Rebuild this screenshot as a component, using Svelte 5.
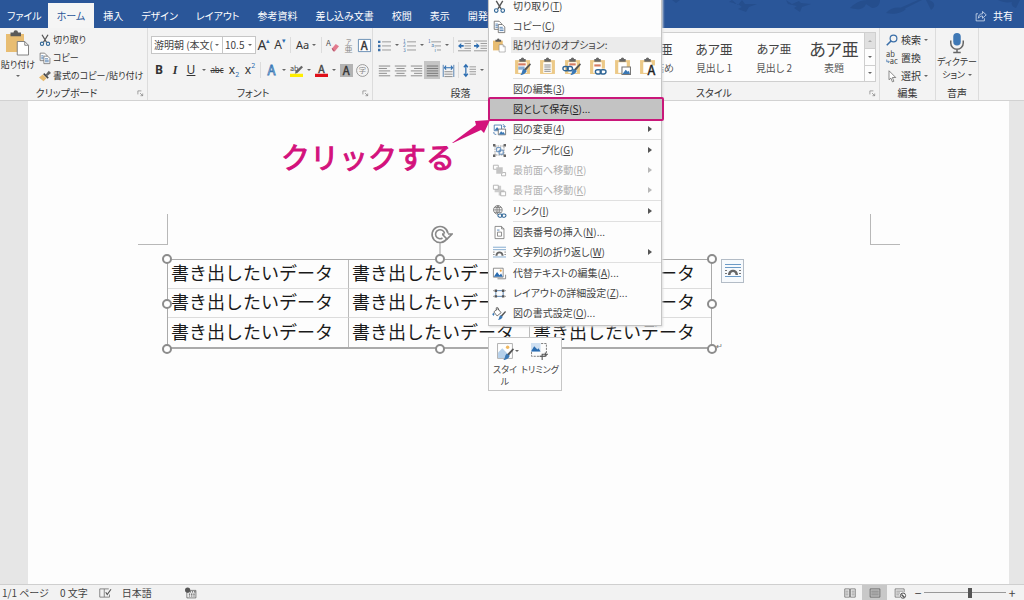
<script>
  // リボン・文書・右クリックメニューの表示データ
  const tabs = ['ファイル', 'ホーム', '挿入', 'デザイン', 'レイアウト', '参考資料', '差し込み文書', '校閲', '表示', '開発'];
  let activeTab = $state('ホーム');

  const styles = [
    { name: '行間詰め', size: 'normal' },
    { name: '見出し 1', size: 'normal' },
    { name: '見出し 2', size: 'small' },
    { name: '表題', size: 'large' },
  ];

  const menuTop = [
    { icon: 'cut', label: '切り取り', key: 'T' },
    { icon: 'copy', label: 'コピー', key: 'C' },
  ];

  const pasteOptions = [
    { icon: 'pasteSource', label: '元の書式を保持' },
    { icon: 'pasteTheme', label: '貼り付け先のテーマを使用' },
    { icon: 'pasteLinkSource', label: 'リンク (元の書式を保持)' },
    { icon: 'pasteLink', label: 'リンク (貼り付け先のテーマ)' },
    { icon: 'pastePicture', label: '図' },
    { icon: 'pasteText', label: 'テキストのみ保持' },
  ];

  const menuGroups = [
    [
      { label: '図の編集', key: '3' },
      { label: '図として保存', key: 'S', more: true, active: true },
      { icon: 'change', label: '図の変更', key: '4', sub: true },
    ],
    [
      { icon: 'group', label: 'グループ化', key: 'G', sub: true },
      { icon: 'front', label: '最前面へ移動', key: 'R', sub: true, disabled: true },
      { icon: 'back', label: '最背面へ移動', key: 'K', sub: true, disabled: true },
    ],
    [{ icon: 'link', label: 'リンク', key: 'I', sub: true }],
    [
      { icon: 'caption', label: '図表番号の挿入', key: 'N', more: true },
      { icon: 'wrap', label: '文字列の折り返し', key: 'W', sub: true },
    ],
    [
      { icon: 'alt', label: '代替テキストの編集', key: 'A', more: true },
      { icon: 'layout', label: 'レイアウトの詳細設定', key: 'Z', more: true },
      { icon: 'format', label: '図の書式設定', key: 'O', more: true },
    ],
  ];

  const cellText = '書き出したいデータ';
  const rows = [0, 1, 2];
  const cols = [0, 1, 2];
  const handles = ['nw', 'n', 'ne', 'w', 'e', 'sw', 's', 'se'];

  let zoom = $state(100);

  // 貼り付け系アイコンで共有するパーツ
  const board =
    '<path d="M1 2h14v13H1z" fill="#ecc987"/><path d="M4 4h8v10H4z" fill="#fff"/><path d="M5 1h1.500a1.500 1.500 0 0 1 3 0H11v2.500H5z" fill="#666"/>';
  const chain =
    '<path d="M6 10h10v6H6z" fill="#fff"/><g fill="none" stroke="#2f6595" stroke-width="1.300"><rect x="6" y="11" width="5.500" height="4" rx="2"/><rect x="10.500" y="11" width="5.500" height="4" rx="2"/></g>';
  const brush =
    '<path d="M15 5l1 1-5 6-2-1z" fill="#555"/><path d="M9 10l3 2c-1 3-4 4-6 4 2-2 1-4 3-6z" fill="#3a78b5"/>';

  const icons = {
    paste:
      '<path d="M0 2h12v12H0z" fill="#e8bd72"/><path d="M3 1h2a1.500 1.500 0 0 1 3 0h2v2.500H3z" fill="#5a5a5a"/><path d="M7.500 7h5l2.500 2.500V16H7.500z" fill="#fff" stroke="#777" stroke-width=".6"/><path d="M12.500 7v2.500H15" fill="none" stroke="#777" stroke-width=".6"/>',
    cut: '<path d="M4 1l6 10M12 1L6 11" stroke="#555" stroke-width="1.700" fill="none"/><circle cx="4" cy="13" r="2.200" fill="none" stroke="#2f6595" stroke-width="1.400"/><circle cx="12" cy="13" r="2.200" fill="none" stroke="#2f6595" stroke-width="1.400"/>',
    copy: '<g fill="#fff" stroke="#666"><path d="M1.500 1.500h6l3 3v7h-9z"/><path d="M6.500 5.500h5l3 3v7h-8z"/></g><path d="M3 5h3M3 7h3M3 9h3M8 9h4M8 11h5M8 13h5" stroke="#3b6fa8"/>',
    painter: '<path d="M9 6l4-5 3 3-5 4z" fill="#666"/><path d="M7 4l6 6-1.500 1.500-6-6z" fill="#444"/><path d="M5 6l5 5-4 4-6-5z" fill="#e6ba6e"/>',
    eraser: '<text x="0" y="9" font-size="10" fill="#555">A</text><path d="M7 12l5-6 4 3-5 6H9z" fill="#e27a8e"/><path d="M7 12l2 3h2l-3-4z" fill="#b65f72"/>',
    ruby: '<text x="5" y="6" font-size="7" fill="#777">ア</text><text x="3" y="16" font-size="10" fill="#888">亜</text>',
    boxA: '<path d="M.5.5h15v15H.5z" fill="#fff" stroke="#4f7ba8"/><text x="3.500" y="13" font-size="14" fill="#333" stroke="#333" stroke-width=".5">A</text>',
    outlineA: '<text x="3" y="14" font-size="16" fill="#fff" stroke="#3a78b5">A</text>',
    marker: '<text x="0" y="8" font-size="9" fill="#444">ab</text><path d="M14 2l2 2-7 7-3 1 1-3z" fill="#666"/><path d="M0 12h16v4H0z" fill="#ffee00"/>',
    colorA: '<text x="4" y="11" font-size="13" fill="#444" stroke="#444" stroke-width=".5">A</text><path d="M0 12h16v4H0z" fill="#e0101a"/>',
    shadeA: '<path d="M0 0h16v16H0z" fill="#b3b3b3"/><text x="3.500" y="13" font-size="14" fill="#333" stroke="#333" stroke-width=".5">A</text>',
    enclose: '<circle cx="8" cy="8" r="7.300" fill="none" stroke="#888"/><text x="3.500" y="11.500" font-size="9" fill="#888">字</text>',
    bullets: '<path d="M0 2h3v3H0zM0 7h3v3H0zM0 12h3v3H0z" fill="#3b6fa8"/><path d="M5 3.500h11M5 8.500h11M5 13.500h11" stroke="#888"/>',
    numbers: '<g font-size="6" fill="#3b6fa8"><text x="0" y="5">1</text><text x="0" y="10">2</text><text x="0" y="16">3</text></g><path d="M5 3.500h11M5 8.500h11M5 13.500h11" stroke="#888"/>',
    multilevel: '<g font-size="6" fill="#3b6fa8"><text x="0" y="5">1</text><text x="4" y="10">a</text><text x="8" y="16">i</text></g><path d="M4 3.500h12M8 8.500h8M11 13.500h5" stroke="#888"/>',
    outdent: '<path d="M0 2.500h16M8 5.500h8M8 8.500h8M8 11.500h8M0 14.500h16" stroke="#888"/><path d="M0 8.500l4-3.500v2.500h3v2H4V12z" fill="#2b6cb0"/>',
    indent: '<path d="M0 2.500h16M8 5.500h8M8 8.500h8M8 11.500h8M0 14.500h16" stroke="#888"/><path d="M7 8.500L3 5v2.500H0v2h3V12z" fill="#2b6cb0"/>',
    alignL: '<path d="M1 2.500h14M1 5.500h10M1 8.500h14M1 11.500h10M1 14.500h14" stroke="#777"/>',
    alignC: '<path d="M1 2.500h14M3 5.500h10M1 8.500h14M3 11.500h10M1 14.500h14" stroke="#777"/>',
    alignR: '<path d="M1 2.500h14M5 5.500h10M1 8.500h14M5 11.500h10M1 14.500h14" stroke="#777"/>',
    justify: '<path d="M1 2.500h14M1 5.500h14M1 8.500h14M1 11.500h14M1 14.500h14" stroke="#666"/>',
    distribute: '<path d="M1.500 1v15M14.500 1v15" stroke="#3b6fa8"/><path d="M3 4.500h10M5 2L3 4.500 5 7M11 2l2 2.500L11 7" fill="none" stroke="#2b6cb0" stroke-width="1.300"/><path d="M3 9.500h10M3 12.500h10M3 15.500h10" stroke="#777"/>',
    spacing: '<path d="M3.500 1v14M1 4l2.500-3L6 4M1 12l2.500 3L6 12" fill="none" stroke="#2b6cb0" stroke-width="1.500"/><path d="M8 3.500h8M8 6.500h8M8 9.500h8M8 12.500h8" stroke="#888"/>',
    search: '<circle cx="10" cy="6" r="4.500" fill="none" stroke="#3b6fa8" stroke-width="1.600"/><path d="M7 9l-6 6" stroke="#3b6fa8" stroke-width="2.200"/>',
    replace: '<g font-size="10" fill="#444"><text x="0" y="7">ab</text><text x="5" y="16">ac</text></g><path d="M1 10v3h3M3 11.500L4.500 13 3 14.500" fill="none" stroke="#3b6fa8"/>',
    select: '<path d="M4 1l9 9H8.500l2 5-2 .8-2-5L4 13z" fill="#fff" stroke="#666"/>',
    mic: '<rect x="5" y="0" width="6" height="10" rx="3" fill="#3f78b5"/><path d="M3 6v2a5 5 0 0 0 10 0V6M8 13v2.500M5 15.500h6" fill="none" stroke="#666" stroke-width="1.200"/>',
    share: '<path d="M4 5H1.500v9.500h11V11" fill="none" stroke="#dce6f4"/><path d="M4.500 11c0-4 2-6 5.500-6V2l5 4.500-5 4.500V8c-3 0-4 1-5.500 3z" fill="none" stroke="#dce6f4"/>',
    pasteSource: board + '<path d="M4 5h7v2H4z" fill="#d67b60"/><path d="M4 8h6v3H4z" fill="#8aacd0"/>' + brush,
    pasteTheme: board + '<path d="M5 6.500h6M5 8.500h6M5 10.500h6M5 12.500h6" stroke="#888"/>',
    pasteLinkSource: board + '<path d="M5 5h6v2H5z" fill="#d67b60"/><g fill="none" stroke="#2f6595" stroke-width="1.300"><rect x="-1" y="8" width="5" height="4" rx="2"/><rect x="3" y="8" width="5" height="4" rx="2"/></g>' + brush,
    pasteLink: board + '<path d="M5 6h6v2H5z" fill="#d67b60"/>' + chain,
    pastePicture: board + '<path d="M7.500 8.500h8v7h-8z" fill="#fff" stroke="#777"/><path d="M8 15l3-4 2 2 1-1 1 3z" fill="#3a78b5"/>',
    pasteText: board + '<path d="M8 7h8v9H8z" fill="#fff"/><text x="8" y="16" font-size="12" fill="#222" stroke="#222" stroke-width=".4">A</text>',
    change: '<path d="M1.500 2.500h9v7h-9z" fill="#fff" stroke="#3b6fa8"/><path d="M2 9l3-4 3 4z" fill="#3a78b5"/><path d="M6.500 7.500h9v7h-9z" fill="#fff" stroke="#666"/><path d="M7 14l3-4 2 2 1-1 2 3z" fill="#3a78b5"/><path d="M12 2c2 0 2 1 2 3M12.500 4L14 5.500 15.500 4M1 11c0 3 1 3 3 3" fill="none" stroke="#3b6fa8"/>',
    group: '<path d="M2.500 2.500h11v11h-11z" fill="none" stroke="#888" stroke-dasharray="2 1"/><path d="M4.500 4.500h5v5h-5zM7.500 7.500h5v5h-5z" fill="none" stroke="#3b6fa8"/><path d="M0 0h3v3H0zM13 0h3v3h-3zM0 13h3v3H0zM13 13h3v3h-3z" fill="#666"/>',
    front: '<path d="M.5 1.500h6v5h-6zM10.500 10.500h5v4h-5z" fill="none" stroke="#aaa"/><path d="M4 4h8v8H4z" fill="#c4c4c4"/>',
    back: '<path d="M2 2h8v8H2zM7 7h7v7H7z" fill="#ccc"/><path d="M.5 1.500h6v5h-6zM9.500 9.500h6v5h-6z" fill="#fff" stroke="#aaa"/>',
    link: '<circle cx="6" cy="6" r="5.300" fill="none" stroke="#666"/><path d="M1 6h10M6 1v10M2 3h8M2 9h8M6 1C3 4 3 8 6 11M6 1c3 3 3 7 0 10" fill="none" stroke="#666" stroke-width=".8"/>' + chain,
    caption: '<path d="M2.500.500h8l3 3v12h-11z" fill="#fff" stroke="#777"/><path d="M10.500.500v3h3M5.500 7.500h5v5h-5z" fill="none" stroke="#777"/><path d="M5 5h3" stroke="#3b6fa8"/>',
    wrap: '<path d="M0 1.500h16M0 4.500h16M0 13.500h16" stroke="#6b9ac6"/><path d="M0 7.500h2M14 7.500h2M0 10.500h2M14 10.500h2" stroke="#777"/><path d="M3 12c0-7 10-7 10 0h-2.500c0-4-5-4-5 0z" fill="#666"/>',
    alt: '<path d="M.5 1.500h12v11H.5z" fill="#fff" stroke="#777"/><path d="M1 12l4-6 3 4 2-2 2 4z" fill="#2b6cb0"/><circle cx="9.500" cy="4.500" r="1.300" fill="#e8a03c"/><path d="M5.500 14.500h10v-5" fill="none" stroke="#777"/>',
    layout: '<path d="M3.500 4.500h9v7h-9z" fill="none" stroke="#3b6fa8"/><path d="M2 3h3v3H2zM11 3h3v3h-3zM2 10h3v3H2zM11 10h3v3h-3z" fill="#555"/><path d="M0 4.500h2M0 11.500h2M14 4.500h2M14 11.500h2" stroke="#888"/>',
    format: '<path d="M1 6l5-4 4 5-5 4zM4 4V1c2-1 3 0 3 3" fill="#fff" stroke="#555"/><path d="M0 8c-1 3 2 3 1 0z" fill="#3a78b5" stroke="#3a78b5"/>' + brush,
    stylePic: '<path d="M.5.500h14v14H.5z" fill="#fff" stroke="#999" stroke-width=".7"/><circle cx="10" cy="4" r="1.600" fill="#f0b860"/><path d="M1 14V9l4-4 5 5 1 4z" fill="#b5d0ea"/>' + brush,
    crop: '<path d="M.5.500h14v12H.5z" fill="none" stroke="#666" stroke-dasharray="2 1" stroke-width=".8"/><path d="M0 0h9v8H0z" fill="#cfe0f2"/><path d="M0 8l3-5 3 3 1-1 2 3z" fill="#2b6cb0"/><path d="M8 12.500h5.500V9M10.500 16v-5.500H16" fill="none" stroke="#555"/>',
    proof: '<path d="M1 2.500h6v11H1zM7 2.500h6M7 13.500h7V10" fill="none" stroke="#666"/><path d="M9 7l2 3 5-7" fill="none" stroke="#555" stroke-width="1.500"/>',
    macro: '<path d="M2.500 4.500h12v10h-12z" fill="#fff" stroke="#555"/><path d="M3 6.500h12M5 9.500h8M5 12h8" stroke="#555" stroke-width="1.500" stroke-dasharray="2 1"/><circle cx="3.500" cy="4" r="3.500" fill="#555"/>',
    readView: '<path d="M1 2.500h6.500v11H1zM8.500 2.500H15v11H8.500z" fill="none" stroke="#666"/><path d="M2 5.500h4M2 8h4M2 10.500h4M10 5.500h4M10 8h4M10 10.500h4" stroke="#777"/>',
    printView: '<path d="M1.500 2.500h13v11h-13z" fill="none" stroke="#555"/><path d="M3 5.500h10M3 8h10M3 10.500h10" stroke="#666"/>',
    webView: '<path d="M8 13.500H1.500v-11h12V7" fill="none" stroke="#666"/><path d="M3 5.500h9M3 8h5M3 10.500h4" stroke="#777"/><circle cx="12" cy="11.500" r="3.500" fill="#fff" stroke="#555" stroke-width="1.300"/><path d="M10 10l4 4" stroke="#555" stroke-width="2"/>',
    launcher: '<path d="M2 10V2h8M7 7l6 6M13 8v5H8" fill="none" stroke="#777" stroke-width="1.500"/>',
  };
</script>

{#snippet icon(name)}
  <svg class="icon" viewBox="0 0 16 16" aria-hidden="true">{@html icons[name]}</svg>
{/snippet}

{#snippet tool(name, label, on = false)}
  <button class="tool" class:on aria-label={label}>{@render icon(name)}</button>
{/snippet}

{#snippet drop(label)}
  <button class="drop" aria-label={label}><i class="caret"></i></button>
{/snippet}

{#snippet menuItem(item)}
  <button class="item" class:active={item.active} role="menuitem" disabled={item.disabled}>
    <span class="slot">{#if item.icon}{@render icon(item.icon)}{/if}</span>
    <span class="text">{item.label}(<u>{item.key}</u>){item.more ? '...' : ''}</span>
    {#if item.sub}<i class="sub"></i>{/if}
  </button>
{/snippet}

<div class="window">
  <header class="titlebar">
    <svg class="leaves" viewBox="0 0 364 14" aria-hidden="true">
      <path d="M72 0l6 5 4-5 3 4 12 0-8 3-3 5-8-3 4-2-4-3-9-2zM126 0l6 4 7-3 2 2 10 1-9 3-2 5-6-4 3-2-9-2zM190 8c8-8 14-8 20-8h10c0 4-2 8-8 8l-6-4c-2 6-9 6-16 4zM226 13c4-5 12-7 20-4-4 4-12 6-20 4zM240 8l18-8h4l-18 9zM266 0l5 10c5-4 4-8-2-10zM338 0h22l-4 8c-4-1-5-4-4-6-5 1-10 0-14-2zM12 0h8l-4 3z" />
    </svg>
    <nav class="tabs">
      {#each tabs as tab}
        <button class="tab" class:current={tab === activeTab} onclick={() => (activeTab = tab)}>{tab}</button>
      {/each}
    </nav>
    <button class="share">{@render icon('share')}共有</button>
  </header>

  <section class="ribbon">
    <div class="group clipboard">
      <div class="body">
        <button class="big">{@render icon('paste')}<span>貼り付け</span><i class="caret"></i></button>
        <div class="stack">
          <button class="line">{@render icon('cut')}切り取り</button>
          <button class="line">{@render icon('copy')}コピー</button>
          <button class="line">{@render icon('painter')}書式のコピー/貼り付け</button>
        </div>
      </div>
      <footer>クリップボード<span class="launch">{@render icon('launcher')}</span></footer>
    </div>

    <div class="group font">
      <div class="rows">
        <div class="row">
          <label class="combo family">
            <select aria-label="フォント"><option>游明朝 (本文(</option></select>
            <i class="caret"></i>
          </label>
          <label class="combo size">
            <select aria-label="フォント サイズ"><option>10.5</option></select>
            <i class="caret"></i>
          </label>
          <button class="tool letter grow">A<sup>▴</sup></button>
          <button class="tool letter">A<sup>▾</sup></button>
          <i class="bar"></i>
          <button class="tool letter case">Aa<i class="caret"></i></button>
          <i class="bar"></i>
          {@render tool('eraser', '書式のクリア')}
          {@render tool('ruby', 'ルビ')}
          {@render tool('boxA', '囲み線')}
        </div>
        <div class="row">
          <button class="tool letter"><b>B</b></button>
          <button class="tool letter"><em>I</em></button>
          <button class="tool letter"><u>U</u></button>
          {@render drop('下線')}
          <button class="tool letter strike"><s>abc</s></button>
          <button class="tool letter">x<small>2</small></button>
          <button class="tool letter">x<sup>2</sup></button>
          <i class="bar"></i>
          {@render tool('outlineA', '文字の効果')}
          {@render drop('文字の効果の一覧')}
          {@render tool('marker', '蛍光ペン')}
          {@render drop('蛍光ペンの色')}
          {@render tool('colorA', 'フォントの色')}
          {@render drop('フォントの色の一覧')}
          {@render tool('shadeA', '文字の網かけ')}
          {@render tool('enclose', '囲い文字')}
        </div>
      </div>
      <footer>フォント<span class="launch">{@render icon('launcher')}</span></footer>
    </div>

    <div class="group paragraph">
      <div class="rows">
        <div class="row">
          {@render tool('bullets', '箇条書き')}
          {@render drop('行頭文字')}
          {@render tool('numbers', '段落番号')}
          {@render drop('番号の書式')}
          {@render tool('multilevel', 'アウトライン')}
          {@render drop('リストの種類')}
          <i class="bar"></i>
          {@render tool('outdent', 'インデントを減らす')}
          {@render tool('indent', 'インデントを増やす')}
        </div>
        <div class="row">
          {@render tool('alignL', '左揃え')}
          {@render tool('alignC', '中央揃え')}
          {@render tool('alignR', '右揃え')}
          {@render tool('justify', '両端揃え', true)}
          {@render tool('distribute', '均等割り付け')}
          <i class="bar"></i>
          {@render tool('spacing', '行と段落の間隔')}
          {@render drop('行間')}
        </div>
      </div>
      <footer>段落</footer>
    </div>

    <div class="group styles">
      <div class="gallery">
        {#each styles as style}
          <button class="style">
            <span class="sample {style.size}">あア亜</span>
            <span>{style.name}</span>
          </button>
        {/each}
        <div class="scroll">
          <button class="off" aria-label="上へ"><i class="caret up"></i></button>
          <button aria-label="下へ"><i class="caret"></i></button>
          <button class="all" aria-label="その他"><i class="caret"></i></button>
        </div>
      </div>
      <footer>スタイル<span class="launch">{@render icon('launcher')}</span></footer>
    </div>

    <div class="group edit">
      <div class="stack">
        <button class="line">{@render icon('search')}検索<i class="caret"></i></button>
        <button class="line">{@render icon('replace')}置換</button>
        <button class="line">{@render icon('select')}選択<i class="caret"></i></button>
      </div>
      <footer>編集</footer>
    </div>

    <div class="group voice">
      <button class="big">{@render icon('mic')}<span>ディクテー<br />ション<i class="caret"></i></span></button>
      <footer>音声</footer>
    </div>
  </section>

  <main class="canvas">
    <div class="page">
      <div class="marks"><i class="mark left"></i><i class="mark right"></i></div>
      <div class="picture">
        <table>
          <tbody>
            {#each rows as row}
              <tr>
                {#each cols as col}<td>{cellText}</td>{/each}
              </tr>
            {/each}
          </tbody>
        </table>
        {#each handles as pos}<i class="handle {pos}"></i>{/each}
        <svg class="rotate" viewBox="0 0 24 30" aria-hidden="true">
          <path d="M11 18v12" stroke="#999" />
          <path d="M18 14.500A8 8 0 1 1 19 9.500" fill="none" stroke="#888" stroke-width="1.600" />
          <path d="M13.500 14A4.500 4.500 0 1 1 15.500 9.500" fill="none" stroke="#888" stroke-width="1.600" />
          <path d="M13 10h2.500M19 10h4l-5 5-4.500-4.500" fill="none" stroke="#888" stroke-width="1.600" />
        </svg>
        <button class="wrap-options" aria-label="レイアウト オプション">{@render icon('wrap')}</button>
        <span class="return">↵</span>
      </div>
    </div>
  </main>

  <footer class="status">
    <span>1/1 ページ</span>
    <span>0 文字</span>
    {@render icon('proof')}
    <span class="lang">日本語</span>
    {@render icon('macro')}
    <div class="views">
      <button class="view" aria-label="閲覧モード">{@render icon('readView')}</button>
      <button class="view on" aria-label="印刷レイアウト">{@render icon('printView')}</button>
      <button class="view" aria-label="Web レイアウト">{@render icon('webView')}</button>
      <button class="step" aria-label="縮小">−</button>
      <input type="range" min="10" max="170" bind:value={zoom} aria-label="ズーム" />
      <button class="step" aria-label="拡大">+</button>
    </div>
  </footer>

  <div class="menu" role="menu">
    {#each menuTop as item}{@render menuItem(item)}{/each}
    <div class="heading"><span class="slot">{@render icon('paste')}</span>貼り付けのオプション:</div>
    <div class="pastes">
      {#each pasteOptions as option}
        <button aria-label={option.label}>{@render icon(option.icon)}</button>
      {/each}
    </div>
    {#each menuGroups as group}
      <div class="section">
        {#each group as item}{@render menuItem(item)}{/each}
      </div>
    {/each}
  </div>

  <div class="mini">
    <button>{@render icon('stylePic')}<i class="caret"></i><span>スタイ<br />ル</span></button>
    <button>{@render icon('crop')}<span>トリミング</span></button>
  </div>

  <!-- 操作手順の注釈 -->
  <div class="focus"></div>
  <svg class="arrow" viewBox="0 0 40 24" aria-hidden="true">
    <path d="M0 24L24 6l-1-4 15-1-6 13-3-3L1 24z" fill="#d3127c" />
  </svg>
  <p class="callout">クリックする</p>
</div>

<style>
  :global(body) {
    margin: 0;
  }
  .window {
    position: relative;
    display: flex;
    flex-direction: column;
    min-height: 100vh;
    overflow: hidden;
    background: #fdfdfd;
    color: #333;
    font-family: 'Noto Sans CJK JP', sans-serif;
    font-size: 10px;
    line-height: 14px;
    font-feature-settings: 'palt';
  }
  button {
    display: flex;
    align-items: center;
    padding: 0;
    border: 0;
    background: none;
    color: inherit;
    font: inherit;
    font-feature-settings: inherit;
    white-space: nowrap;
  }
  .icon {
    flex: none;
    width: 12px;
    height: 12px;
    overflow: visible;
  }
  .caret {
    flex: none;
    border: 2px solid transparent;
    border-top-color: #666;
    border-bottom: 0;
  }
  .caret.up {
    border-top: 0;
    border-bottom: 2px solid #aaa;
  }

  /* タイトルバー */
  .titlebar {
    position: relative;
    display: flex;
    justify-content: space-between;
    height: 28px;
    background: #2a5699;
    color: #fff;
  }
  .leaves {
    position: absolute;
    top: 0;
    right: 0;
    width: 364px;
    height: 14px;
    fill: #254e8d;
  }
  .tabs {
    display: flex;
    padding-top: 3px;
  }
  .tab {
    padding: 0 9px;
  }
  .tab:first-child {
    padding: 0 6px 0 7px;
  }
  .tab.current {
    background: #f5f5f5;
    color: #2a5699;
  }
  .share {
    position: relative;
    gap: 6px;
    padding: 4px 11px 0 0;
  }

  /* リボン */
  .ribbon {
    display: flex;
    height: 72px;
    border-bottom: 1px solid #d2d2d2;
    background: #f3f3f3;
  }
  .group {
    box-sizing: border-box;
    display: flex;
    flex: none;
    flex-direction: column;
    justify-content: space-between;
    padding-top: 3px;
    border-right: 1px solid #dcdcdc;
  }
  .group footer {
    position: relative;
    text-align: center;
  }
  .clipboard footer,
  .font footer {
    padding-right: 14px;
  }
  .launch {
    position: absolute;
    right: 3px;
    top: 4px;
    display: flex;
  }
  .launch .icon {
    width: 7px;
    height: 7px;
  }
  .clipboard {
    width: 148px;
  }
  .body {
    display: flex;
    gap: 3px;
    font-size: 9px;
  }
  .big {
    flex-direction: column;
  }
  .body .big {
    width: 36px;
    gap: 3px;
  }
  .body .big .icon {
    width: 24px;
    height: 24px;
  }
  .stack {
    display: flex;
    flex-direction: column;
  }
  .line {
    height: 18px;
    gap: 2px;
  }
  .rows {
    display: flex;
    flex-direction: column;
    gap: 7px;
    padding: 5px 0 0 3px;
  }
  .row {
    display: flex;
    align-items: center;
    height: 18px;
  }
  .font {
    width: 225px;
  }
  .paragraph {
    width: 176px;
  }
  .combo {
    position: relative;
    box-sizing: border-box;
    display: flex;
    height: 18px;
    border: 1px solid #c6c6c6;
    background: #fff;
  }
  .combo.family {
    width: 72px;
  }
  .combo.size {
    width: 33px;
    border-left: 0;
  }
  .combo select {
    width: 100%;
    padding: 0 0 0 2px;
    border: 0;
    appearance: none;
    background: none;
    color: #444;
    font: inherit;
    font-feature-settings: inherit;
  }
  .combo .caret {
    position: absolute;
    top: 7px;
    right: 3px;
  }
  .tool {
    flex: none;
    justify-content: center;
    width: 16px;
    height: 18px;
  }
  .tool .icon {
    width: 13px;
    height: 13px;
  }
  .tool.on {
    background: #c5c5c5;
  }
  .drop {
    flex: none;
    justify-content: center;
    width: 9px;
    height: 18px;
  }
  .bar {
    width: 1px;
    height: 16px;
    margin: 0 2px;
    background: #dcdcdc;
  }
  .letter {
    color: #333;
    font-family: 'Noto Sans', sans-serif;
    font-size: 12px;
  }
  .letter em {
    font-family: 'Liberation Serif', serif;
    font-weight: bold;
  }
  .letter sup,
  .letter small {
    color: #2b6cb0;
    font-size: 7px;
  }
  .letter sup {
    align-self: flex-start;
    line-height: 10px;
  }
  .letter small {
    align-self: flex-end;
    line-height: 8px;
  }
  .letter.grow {
    font-size: 14px;
  }
  .letter.case {
    gap: 3px;
    width: 26px;
    font-size: 11px;
  }
  .letter.strike {
    width: 18px;
    font-size: 8px;
  }

  .styles {
    width: 331px;
  }
  .gallery {
    display: flex;
    justify-content: flex-end;
    height: 48px;
    margin: 1px 3px 0 15px;
    border: 1px solid #cfcfcf;
    background: #fdfdfd;
  }
  .style {
    flex-direction: column;
    justify-content: center;
    gap: 3px;
    width: 60px;
    color: #555;
  }
  .sample {
    height: 18px;
    color: #444;
    font-size: 13px;
    line-height: 18px;
  }
  .sample.small {
    font-size: 12px;
  }
  .sample.large {
    font-size: 17px;
  }
  .scroll {
    display: grid;
    width: 10px;
    border-left: 1px solid #cfcfcf;
  }
  .scroll button {
    justify-content: center;
    border-bottom: 1px solid #cfcfcf;
  }
  .scroll .off {
    background: #e0e0e0;
  }
  .scroll .all {
    border-bottom: 0;
  }
  .edit {
    width: 56px;
  }
  .edit .stack {
    padding-left: 6px;
  }
  .edit .line {
    gap: 3px;
  }
  .voice {
    width: 43px;
  }
  .voice .big {
    gap: 2px;
    padding-top: 2px;
    font-size: 9px;
    line-height: 13px;
    text-align: center;
  }
  .voice .icon {
    width: 20px;
    height: 20px;
  }
  .voice .caret {
    display: inline-block;
    margin: 0 0 2px 3px;
  }

  /* 文書 */
  .canvas {
    display: flex;
    flex: 1;
    padding: 0 15px 0 28px;
    background: #e6e6e6;
  }
  .page {
    flex: 1;
    padding-top: 113px;
    background: #fdfdfd;
  }
  .marks {
    display: flex;
    justify-content: space-between;
    margin: 0 109px 0 110px;
  }
  .mark {
    box-sizing: border-box;
    width: 30px;
    height: 31px;
    border-bottom: 1px solid #b8b8b8;
  }
  .mark.left {
    border-right: 1px solid #b8b8b8;
  }
  .mark.right {
    border-left: 1px solid #b8b8b8;
  }
  .picture {
    position: relative;
    width: fit-content;
    margin: 14px 0 0 139px;
  }
  table {
    border: 1px solid #aaa;
    border-bottom-width: 2px;
    border-spacing: 0;
    color: #1a1a1a;
    font-size: 18px;
    font-feature-settings: normal;
  }
  td {
    box-sizing: border-box;
    width: 181px;
    height: 29px;
    padding: 0 0 4px 3px;
    border-right: 1px solid #bbb;
    border-bottom: 1px solid #dcdcdc;
    line-height: 20px;
    white-space: nowrap;
  }
  td:last-child {
    border-right: 0;
  }
  tr:last-child td {
    border-bottom: 0;
  }
  .handle {
    position: absolute;
    top: 0;
    left: 0;
    box-sizing: border-box;
    width: 10px;
    height: 10px;
    margin: -5px;
    border: 2px solid #8c8c8c;
    border-radius: 50%;
    background: #fff;
  }
  .handle.n,
  .handle.s {
    left: 50%;
  }
  .handle.ne,
  .handle.e,
  .handle.se {
    left: 100%;
  }
  .handle.w,
  .handle.e {
    top: 50%;
  }
  .handle.sw,
  .handle.s,
  .handle.se {
    top: 100%;
  }
  .rotate {
    position: absolute;
    bottom: 100%;
    left: 50%;
    width: 24px;
    height: 30px;
    margin: 0 0 5px -11px;
  }
  .wrap-options {
    position: absolute;
    top: 0;
    left: 100%;
    justify-content: center;
    width: 23px;
    height: 24px;
    margin-left: 9px;
    border: 1px solid #b3bcc6;
    background: #f7fafd;
  }
  .wrap-options .icon {
    width: 16px;
    height: 16px;
  }
  .return {
    position: absolute;
    bottom: -4px;
    left: 100%;
    padding-left: 4px;
    color: #777;
    font-size: 8px;
  }

  /* ステータスバー */
  .status {
    display: flex;
    align-items: center;
    gap: 11px;
    height: 15px;
    padding: 0 6px 0 2px;
    overflow: hidden;
    border-top: 1px solid #cfcfcf;
    background: #f2f2f2;
    color: #444;
  }
  .lang {
    margin-right: 22px;
  }
  .views {
    display: flex;
    align-items: center;
    margin-left: auto;
  }
  .view {
    justify-content: center;
    width: 25px;
    height: 15px;
  }
  .view.on {
    background: #c8c8c8;
  }
  .step {
    justify-content: center;
    width: 12px;
    font-size: 12px;
    line-height: 12px;
  }
  input[type='range'] {
    width: 82px;
    height: 12px;
    margin: 0;
    appearance: none;
    background: linear-gradient(#999, #999) center / 100% 1px no-repeat;
  }
  input[type='range']::-webkit-slider-thumb {
    width: 4px;
    height: 10px;
    appearance: none;
    background: #555;
  }

  /* 右クリックメニュー */
  .menu {
    position: absolute;
    top: -5px;
    left: 488px;
    box-sizing: border-box;
    width: 174px;
    padding-bottom: 2px;
    border: 1px solid #c4c4c4;
    background: #fdfdfd;
    box-shadow: 1px 1px 2px #ddd;
    color: #444;
  }
  .menu .icon {
    width: 13px;
    height: 13px;
  }
  .item {
    width: 100%;
    height: 20px;
  }
  .item:disabled {
    color: #b0b0b0;
  }
  .item.active {
    background: #c3c3c3;
    color: #222;
  }
  .slot {
    display: flex;
    flex: none;
    justify-content: center;
    width: 20px;
    margin-right: 4px;
  }
  .text {
    flex: 1;
    text-align: left;
  }
  .sub {
    margin-right: 9px;
    border: 3px solid transparent;
    border-left: 4px solid #555;
    border-right: 0;
  }
  .item:disabled .sub {
    border-left-color: #b8b8b8;
  }
  .heading {
    display: flex;
    align-items: center;
    height: 18px;
    background: linear-gradient(#ebebeb, #ebebeb) right / 150px 16px no-repeat;
  }
  .pastes {
    display: flex;
    align-items: center;
    gap: 6px;
    height: 24px;
    padding-left: 24px;
  }
  .pastes button {
    justify-content: center;
    width: 19px;
  }
  .pastes .icon {
    width: 17px;
    height: 17px;
  }
  .section {
    padding-top: 1px;
    background: linear-gradient(#e0e0e0, #e0e0e0) right top / 148px 1px no-repeat;
  }

  .mini {
    position: absolute;
    top: 337px;
    left: 488px;
    display: flex;
    gap: 2px;
    padding: 5px 2px 2px;
    border: 1px solid #c6c6c6;
    background: #fdfdfd;
    color: #444;
    font-size: 9px;
    line-height: 12px;
  }
  .mini button {
    position: relative;
    flex-direction: column;
    gap: 4px;
    min-width: 28px;
    height: 45px;
  }
  .mini .icon {
    width: 17px;
    height: 17px;
  }
  .mini .caret {
    position: absolute;
    top: 7px;
    right: 0;
  }

  .focus {
    position: absolute;
    top: 97px;
    left: 488px;
    box-sizing: border-box;
    width: 176px;
    height: 24px;
    border: 2px solid #c9187a;
    border-radius: 2px;
  }
  .arrow {
    position: absolute;
    top: 119px;
    left: 452px;
    width: 40px;
    height: 24px;
  }
  .callout {
    position: absolute;
    top: 136px;
    left: 281px;
    margin: 0;
    color: #d3127c;
    font-size: 29px;
    line-height: 40px;
    font-feature-settings: normal;
    -webkit-text-stroke: 1px #d3127c;
  }
</style>
